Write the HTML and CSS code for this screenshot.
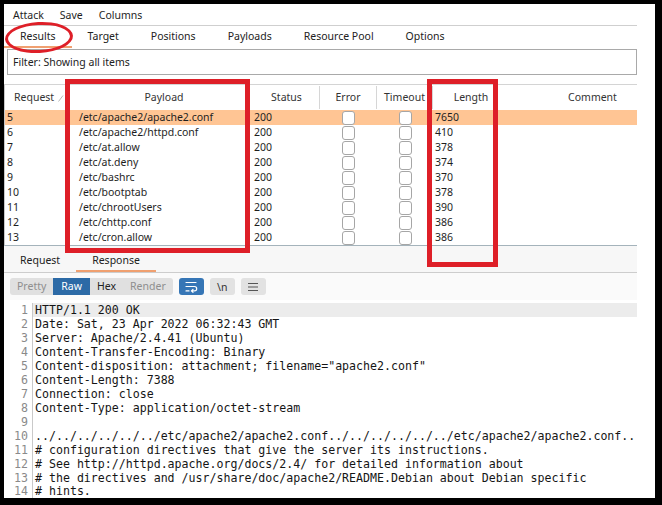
FILE: index.html
```html
<!DOCTYPE html>
<html>
<head>
<meta charset="utf-8">
<link rel="stylesheet" href="styles.css">
</head>
<body>
<div class="window">
  <div class="menubar"><span>Attack</span><span>Save</span><span>Columns</span></div>
  <div class="tabs">
    <span class="tab active">Results</span>
    <span class="tab">Target</span>
    <span class="tab">Positions</span>
    <span class="tab">Payloads</span>
    <span class="tab">Resource Pool</span>
    <span class="tab">Options</span>
  </div>
  <div class="filter">Filter: Showing all items</div>
  <div class="table">
    <div class="row head">
      <div class="c c-req">Request <svg class="sort" width="6" height="7" viewBox="0 0 6 7"><path d="M0.5 6.5L5 0.5" stroke="#b8b8b8" stroke-width="1" fill="none"/></svg></div>
      <div class="c c-pay">Payload</div>
      <div class="c c-st">Status</div>
      <div class="c c-err">Error</div>
      <div class="c c-to">Timeout</div>
      <div class="c c-len">Length</div>
      <div class="c c-com">Comment</div>
    </div>
    <div class="row sel"><div class="c c-req">5</div><div class="c c-pay">/etc/apache2/apache2.conf</div><div class="c c-st">200</div><div class="c c-err"><span class="cb"></span></div><div class="c c-to"><span class="cb"></span></div><div class="c c-len">7650</div><div class="c c-com"></div></div>
    <div class="row"><div class="c c-req">6</div><div class="c c-pay">/etc/apache2/httpd.conf</div><div class="c c-st">200</div><div class="c c-err"><span class="cb"></span></div><div class="c c-to"><span class="cb"></span></div><div class="c c-len">410</div><div class="c c-com"></div></div>
    <div class="row"><div class="c c-req">7</div><div class="c c-pay">/etc/at.allow</div><div class="c c-st">200</div><div class="c c-err"><span class="cb"></span></div><div class="c c-to"><span class="cb"></span></div><div class="c c-len">378</div><div class="c c-com"></div></div>
    <div class="row"><div class="c c-req">8</div><div class="c c-pay">/etc/at.deny</div><div class="c c-st">200</div><div class="c c-err"><span class="cb"></span></div><div class="c c-to"><span class="cb"></span></div><div class="c c-len">374</div><div class="c c-com"></div></div>
    <div class="row"><div class="c c-req">9</div><div class="c c-pay">/etc/bashrc</div><div class="c c-st">200</div><div class="c c-err"><span class="cb"></span></div><div class="c c-to"><span class="cb"></span></div><div class="c c-len">370</div><div class="c c-com"></div></div>
    <div class="row"><div class="c c-req">10</div><div class="c c-pay">/etc/bootptab</div><div class="c c-st">200</div><div class="c c-err"><span class="cb"></span></div><div class="c c-to"><span class="cb"></span></div><div class="c c-len">378</div><div class="c c-com"></div></div>
    <div class="row"><div class="c c-req">11</div><div class="c c-pay">/etc/chrootUsers</div><div class="c c-st">200</div><div class="c c-err"><span class="cb"></span></div><div class="c c-to"><span class="cb"></span></div><div class="c c-len">390</div><div class="c c-com"></div></div>
    <div class="row"><div class="c c-req">12</div><div class="c c-pay">/etc/chttp.conf</div><div class="c c-st">200</div><div class="c c-err"><span class="cb"></span></div><div class="c c-to"><span class="cb"></span></div><div class="c c-len">386</div><div class="c c-com"></div></div>
    <div class="row"><div class="c c-req">13</div><div class="c c-pay">/etc/cron.allow</div><div class="c c-st">200</div><div class="c c-err"><span class="cb"></span></div><div class="c c-to"><span class="cb"></span></div><div class="c c-len">386</div><div class="c c-com"></div></div>
  </div>
  <div class="resp">
    <div class="subtabs">
      <span class="tab">Request</span>
      <span class="tab active">Response</span>
    </div>
    <div class="toolbar">
      <div class="seg">
        <span class="sb dim">Pretty</span>
        <span class="sb on">Raw</span>
        <span class="sb">Hex</span>
        <span class="sb dim">Render</span>
      </div>
      <span class="ib on"><svg width="14" height="13" viewBox="0 0 14 13"><path d="M2 2.5h10M2 6.5h8.5a2.2 2.2 0 0 1 0 4.4H7.5M9 9.4l-1.6 1.5L9 12.4M2 10.9h3" stroke="#fff" stroke-width="1.2" fill="none" stroke-linecap="round" stroke-linejoin="round"/></svg></span>
      <span class="ib txt">\n</span>
      <span class="ib"><svg width="12" height="10" viewBox="0 0 12 10"><path d="M1 1.5h10M1 5h10M1 8.5h10" stroke="#555" stroke-width="1.2" fill="none"/></svg></span>
    </div>
    <div class="editor">
      <div class="line cur"><span class="ln">1</span><span class="code">HTTP/1.1 200 OK</span></div>
      <div class="line"><span class="ln">2</span><span class="code">Date: Sat, 23 Apr 2022 06:32:43 GMT</span></div>
      <div class="line"><span class="ln">3</span><span class="code">Server: Apache/2.4.41 (Ubuntu)</span></div>
      <div class="line"><span class="ln">4</span><span class="code">Content-Transfer-Encoding: Binary</span></div>
      <div class="line"><span class="ln">5</span><span class="code">Content-disposition: attachment; filename="apache2.conf"</span></div>
      <div class="line"><span class="ln">6</span><span class="code">Content-Length: 7388</span></div>
      <div class="line"><span class="ln">7</span><span class="code">Connection: close</span></div>
      <div class="line"><span class="ln">8</span><span class="code">Content-Type: application/octet-stream</span></div>
      <div class="line"><span class="ln">9</span><span class="code"></span></div>
      <div class="line"><span class="ln">10</span><span class="code">../../../../../../etc/apache2/apache2.conf../../../../../../etc/apache2/apache2.conf..</span></div>
      <div class="line"><span class="ln">11</span><span class="code"># configuration directives that give the server its instructions.</span></div>
      <div class="line"><span class="ln">12</span><span class="code"># See http://httpd.apache.org/docs/2.4/ for detailed information about</span></div>
      <div class="line"><span class="ln">13</span><span class="code"># the directives and /usr/share/doc/apache2/README.Debian about Debian specific</span></div>
      <div class="line last"><span class="ln">14</span><span class="code"># hints.</span></div>
    </div>
  </div>
  <div class="ann ellipse"></div>
  <div class="ann box1"></div>
  <div class="ann box2"></div>
</div>
</body>
</html>
```

FILE: styles.css
```css
* { box-sizing: border-box; }
html, body { margin: 0; padding: 0; }
body {
  background: #000;
  width: 662px;
  height: 505px;
  padding: 4px 7px 7px 4px;
  overflow: hidden;
}
.window {
  position: relative;
  background: #fff;
  width: 651px;
  height: 494px;
  padding-right: 18px;
  overflow: hidden;
  font-family: "Noto Sans", "Open Sans", sans-serif;
  font-size: 10.5px;
  color: #222;
}
.menubar {
  display: flex;
  gap: 16px;
  height: 21px;
  padding-top: 1px;
  line-height: 20px;
  padding-left: 9px;
  font-size: 10.5px;
  color: #1e1e1e;
}
.tabs {
  display: flex;
  border-top: 1px solid #cfcfcf;
  height: 23px;
}
.tab {
  padding: 0 16px;
  line-height: 20px;
  border-bottom: 2px solid transparent;
  font-size: 10.5px;
  color: #222;
}
.tab.active { border-bottom-color: #f0a070; }
.filter {
  margin: 1px 0 0 3px;
  height: 26px;
  border: 1px solid #a9a9a9;
  line-height: 25px;
  padding-left: 5px;
  font-size: 10.5px;
  color: #222;
}
.table {
  margin-top: 9px;
  border-top: 1px solid #d4d4d4;
  border-left: 1px solid #c8c8c8;
  border-bottom: 1px solid #a4b3bb;
}
.row {
  display: grid;
  grid-template-columns: 65px 180px 70px 57px 56px 75px 1fr;
  height: 15px;
  line-height: 15px;
  font-size: 10.5px;
  color: #1e1e1e;
}
.row.head {
  height: 25px;
  line-height: 23px;
  color: #333;
}
.row.head .c {
  text-align: center;
  border-right: 1px solid #d6d6d6;
  margin: 1px 0 1px;
}
.row.head .c-req { text-align: left; padding-left: 9px; }
.row.head .c-pay { border-right-color: transparent; }
.row.head .c-len { border-right-color: transparent; }
.row.head .c-com { border-right: none; padding-left: 40px; }
.sort { vertical-align: -1px; margin-left: 1px; }
.row.sel { background: #ffc594; }
.c { white-space: nowrap; overflow: hidden; }
.row .c-req { padding-left: 2px; }
.row .c-pay { padding-left: 9px; }
.row .c-st { padding-left: 4px; }
.row .c-len { padding-left: 2px; }
.row .c-err, .row .c-to { display: flex; justify-content: center; align-items: center; }
.row.head .c-err, .row.head .c-to { display: block; }
.cb {
  display: block;
  width: 13px;
  height: 14px;
  border: 1px solid #a6a6a6;
  border-radius: 3px;
  background: #fff;
}
.resp {
  background: #fafafa;
}
.subtabs {
  display: flex;
  align-items: flex-end;
  height: 27px;
  background: #f7f7f7;
  border-bottom: 1px solid #cdcdcd;
}
.toolbar {
  display: flex;
  align-items: center;
  gap: 6px;
  height: 27px;
  padding: 5px 0 5px 6px;
}
.seg {
  display: flex;
  height: 17px;
  border-radius: 3px;
  overflow: hidden;
  background: #e0e0e0;
}
.sb {
  line-height: 17px;
  padding: 0 7px;
  font-size: 10.5px;
  color: #222;
}
.sb.dim { color: #8e8e8e; }
.sb.on { background: #2c6aa6; color: #fff; padding: 0 8px; }
.ib {
  width: 25px;
  height: 17px;
  border-radius: 3px;
  background: #e2e2e2;
  display: flex;
  align-items: center;
  justify-content: center;
  font-size: 10.5px;
  color: #333;
}
.ib.on { background: #3676b6; }
.editor {
  background: #fff;
  padding-top: 3px;
  font-family: "DejaVu Sans Mono", monospace;
  font-size: 11.6px;
}
.line {
  display: flex;
  height: 14px;
  line-height: 14px;
}
.line.last { height: 13px; line-height: 13px; }
.ln {
  width: 29px;
  flex: none;
  text-align: right;
  padding-right: 4px;
  color: #8a8a8a;
  border-right: 1px solid #c9c9c9;
}
.code {
  flex: 1;
  padding-left: 2px;
  white-space: pre;
  overflow: hidden;
  color: #151515;
}
.line.cur .code { background: #ececec; }
.ann {
  position: absolute;
  border: 5px solid #de1f28;
}
.ellipse {
  left: 1px;
  top: 18px;
  width: 68px;
  height: 31px;
  border-width: 3px;
  border-radius: 50%;
  transform: rotate(-3deg);
}
.box1 { left: 61px; top: 75px; width: 185px; height: 174px; }
.box2 { left: 423px; top: 75px; width: 71px; height: 188px; }
```
